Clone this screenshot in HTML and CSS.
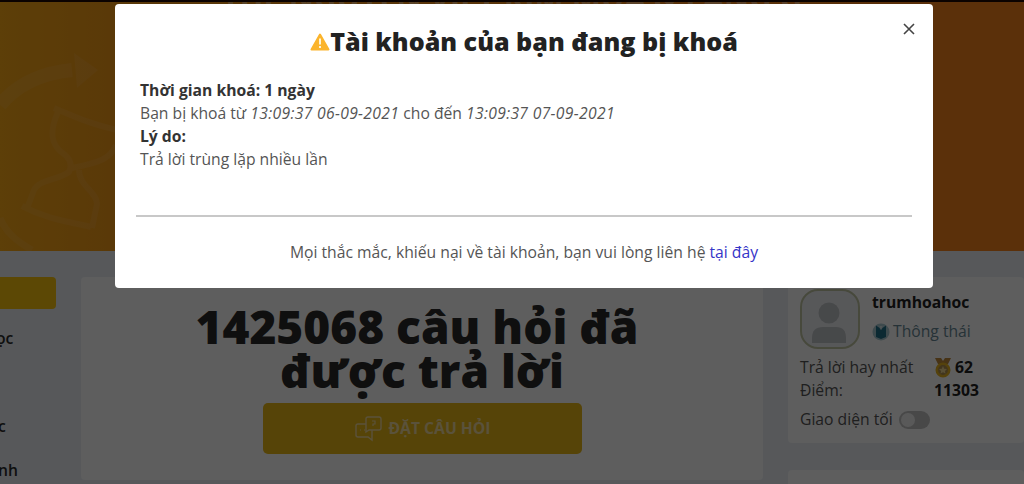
FILE: index.html
```html
<!DOCTYPE html>
<html lang="vi">
<head>
    <meta charset="UTF-8" />
    <meta name="viewport" content="width=device-width, initial-scale=1.0"/>
    <title>Hỏi đáp</title>
    <link rel="stylesheet" href="styles.css">
</head>

<body>
    <div class="hero">
        <h2 class="hero-title">THE NGUYEN VIET KIM MUA &amp; LANG G</h2>
        <svg class="hero-art" width="116" height="251" viewBox="0 0 116 251" fill="none">
            <path d="M0 105 C18 83 42 73 72 70" stroke-width="14"/>
            <path class="fill" d="M74 53 L98 70 L77 88 Z"/>
            <path d="M54 108 C80 119 96 126 122 131 M58 112 C48 134 52 146 64 154 Q74 162 69 172 C58 180 38 180 34 190 L28 206 M22 206 C48 220 72 222 91 227 M79 170 C79 186 97 192 97 204 L92 228 M116 145 C110 160 96 163 72 168" stroke-width="6"/>
            <path d="M0 218 C7 235 20 243 32 250" stroke-width="7"/>
        </svg>
    </div>

    <div class="page">
        <aside class="sidebar">
            <div class="side-button"></div>
            <ul>
                <li>ọc</li>
                <li>c</li>
                <li>nh</li>
            </ul>
        </aside>

        <main class="card ask">
            <h1>1425068 câu hỏi đã <span>được trả lời</span></h1>
            <a class="ask-button" href="#">
                <svg width="29" height="27" viewBox="0 0 29 27" fill="none" stroke="#f4dda0" stroke-width="1.4">
                    <path d="M12 14 V4 Q12 2 14 2 H25 Q27 2 27 4 V13 Q27 15 25 15 H15 L12 17 Z"/>
                    <path d="M12 9 H4 Q2 9 2 11 V20 Q2 22 4 22 H14 L18 25 V15"/>
                    <path d="M18 6 H21 V9 H19 V11 M6 15 H7 M10 15 H11" stroke-width="1.2"/>
                </svg>
                <span>ĐẶT CÂU HỎI</span>
            </a>
        </main>

        <aside class="right">
            <div class="card profile">
                <div class="user">
                    <div class="avatar">
                        <svg width="54" height="54" viewBox="0 0 54 54" fill="#c2c5c9">
                            <circle cx="26" cy="21" r="10.5"/>
                            <path d="M9 51 V46 Q9 35 20 35 H33 Q43 35 43 46 V51 Z"/>
                        </svg>
                    </div>
                    <div>
                        <div class="name">trumhoahoc</div>
                        <div class="rank">
                            <svg width="18" height="18" viewBox="0 0 18 18">
                                <circle cx="9" cy="9" r="8.500" fill="#a9c8d2"/>
                                <path d="M4 2.500 L7.500 5 L9 7 L10.500 5 L14 2.500 V14 L9 16 L4 14 Z" fill="#1f6f88"/>
                                <path d="M7.500 3 H10.500 L9 7 Z" fill="#d5e3e6"/>
                            </svg>
                            <span>Thông thái</span>
                        </div>
                    </div>
                </div>
                <div class="stat"><span>Trả lời hay nhất</span>
                    <svg width="18" height="20" viewBox="0 0 18 20">
                        <path d="M1 0 H7 L9 3 L11 0 H17 L14 6 H4 Z" fill="#c08b3c"/>
                        <circle cx="9" cy="12" r="6.200" fill="#b08f50" stroke="#e6b422" stroke-width="2.600"/>
                        <path d="M9 8 L10.200 10.700 L13 11 L11 13 L11.500 15.500 L9 14.300 L6.500 15.500 L7 13 L5 11 L7.800 10.700 Z" fill="#efd690"/>
                    </svg>
                    <b>62</b>
                </div>
                <div class="stat"><span>Điểm:</span><b>11303</b></div>
                <div class="theme">
                    <span>Giao diện tối</span>
                    <i class="switch"></i>
                </div>
            </div>
            <div class="card more"></div>
        </aside>
    </div>

    <div class="overlay">
        <div class="modal">
            <span class="close">
                <svg width="12" height="12" viewBox="0 0 12 12" stroke="#444" stroke-width="1.6"><path d="M1 1 L11 11 M11 1 L1 11"/></svg>
            </span>
            <h3>
                <svg width="20" height="18" viewBox="0 0 20 18">
                    <path d="M10 1.500 L18.500 16.500 H1.500 Z" fill="#fbb42c" stroke="#fbb42c" stroke-width="2" stroke-linejoin="round"/>
                    <path d="M10 5.500 V11.500 M10 13 V15" stroke="#fff3d6" stroke-width="2"/>
                </svg>
                <span>Tài khoản của bạn đang bị khoá</span>
            </h3>
            <div class="info">
                <b>Thời gian khoá: 1 ngày</b>
                <p>Bạn bị khoá từ <em>13:09:37 06-09-2021</em> cho đến <em>13:09:37 07-09-2021</em></p>
                <b>Lý do:</b>
                <p>Trả lời trùng lặp nhiều lần</p>
            </div>
            <p class="contact">Mọi thắc mắc, khiếu nại về tài khoản, bạn vui lòng liên hệ <a href="#">tại đây</a></p>
        </div>
    </div>
</body>
</html>
```
FILE: styles.css
```css
* {
    box-sizing: border-box;
}

body {
    margin: 0;
    height: 484px;
    overflow: hidden;
    font-family: 'Open Sans', 'Noto Sans', sans-serif;
    font-size: 15.7px;
    line-height: 23px;
    color: #555;
    background-color: #ebeff5;
}

h1, h2, h3, p, ul {
    margin: 0;
    padding: 0;
}

a {
    text-decoration: none;
}

.hero {
    position: relative;
    height: 251px;
    overflow: hidden;
    border-top: 2px solid #200800;
    background: linear-gradient(90deg, #fbaa16, #f49a18 12%, #f6821c 90%);
}

.hero-title {
    margin-top: -19px;
    text-align: center;
    font-size: 31px;
    line-height: 28px;
    white-space: nowrap;
    color: rgba(255, 255, 255, 0.4);
}

.hero-art {
    position: absolute;
    left: 0;
    top: -2px;
    stroke: rgba(255, 200, 130, 0.16);
}

.hero-art .fill {
    fill: rgba(255, 200, 130, 0.16);
    stroke: none;
}

.page {
    display: flex;
    align-items: flex-start;
    height: 233px;
    padding-top: 26px;
    overflow: hidden;
}

.card {
    background-color: #fefefe;
    border-radius: 4px;
}

.sidebar {
    width: 81px;
    flex-shrink: 0;
}

.side-button {
    width: 56px;
    height: 32px;
    border-radius: 0 4px 4px 0;
    background-color: #f8c30e;
}

.sidebar ul {
    list-style: none;
    font-weight: 600;
    color: #2b2b2b;
    padding-top: 18px;
    margin-left: -4px;
}

.sidebar li:nth-child(2) {
    margin-top: 65px;
    margin-left: 2px;
}

.sidebar li:nth-child(3) {
    margin-top: 21px;
    margin-left: 2px;
}

.ask {
    width: 682px;
    height: 203px;
    flex-shrink: 0;
    padding-top: 28px;
}

.ask h1 {
    width: 500px;
    margin-left: 86px;
    text-align: center;
    font-size: 46px;
    font-weight: 800;
    line-height: 43.5px;
    color: #2b2b2b;
}

.ask h1 span {
    display: block;
    padding-left: 10px;
}

.ask-button {
    display: flex;
    align-items: center;
    justify-content: center;
    gap: 5px;
    width: 319px;
    height: 51px;
    margin: 11px 0 0 182px;
    border-radius: 5px;
    background-color: #e8b818;
    color: #f4dda0;
    font-weight: 700;
}

.right {
    flex: 1;
    margin-left: 25px;
}

.profile {
    height: 166px;
    padding: 12px 12px 0;
}

.user {
    display: flex;
    gap: 12px;
    margin-bottom: 7px;
}

.avatar {
    display: flex;
    align-items: center;
    justify-content: center;
    width: 60px;
    height: 60px;
    border: 2px solid #c2c6a4;
    border-radius: 18px;
    background-color: #eceff2;
}

.name {
    margin-top: 2px;
    font-weight: 700;
    color: #222;
}

.rank {
    display: flex;
    align-items: center;
    gap: 3px;
    margin-top: 6px;
    color: #698996;
}

.stat {
    display: flex;
    align-items: center;
    height: 23px;
}

.stat span {
    width: 134px;
}

.stat b {
    color: #222;
}

.stat svg + b {
    margin-left: 3px;
}

.theme {
    display: flex;
    align-items: center;
    gap: 6px;
    margin-top: 6px;
}

.switch {
    width: 31px;
    height: 18px;
    padding: 2px;
    border-radius: 9px;
    background-color: #c4c4c4;
}

.switch::before {
    content: '';
    display: block;
    width: 14px;
    height: 14px;
    border-radius: 50%;
    background-color: #f2f2f2;
}

.more {
    height: 60px;
    margin-top: 27px;
}

.overlay {
    position: absolute;
    inset: 0;
    background-color: rgba(0, 0, 0, 0.63);
}

.modal {
    position: relative;
    width: 818px;
    height: 284px;
    margin: 4px 0 0 115px;
    padding: 21px 21px 0 21px;
    border-radius: 4px;
    background-color: #fff;
}

.close {
    position: absolute;
    top: 19px;
    right: 18px;
    line-height: 0;
}

.modal h3 {
    display: flex;
    align-items: center;
    justify-content: center;
    font-size: 25.1px;
    font-weight: 800;
    line-height: 33px;
    color: #222;
}

.info {
    height: 159px;
    padding: 21px 4px 0;
    border-bottom: 2px solid #c8c8c8;
}

.info b {
    color: #333;
}

.info em {
    letter-spacing: 0.32px;
}

.contact {
    margin-top: 24px;
    text-align: center;
}

.contact a {
    color: #3535c8;
}
```
